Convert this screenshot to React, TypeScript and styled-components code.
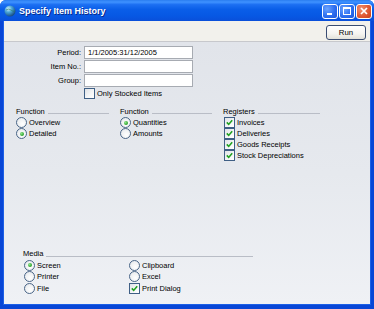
import React from "react";
import styled, { createGlobalStyle } from "styled-components";

const Global = createGlobalStyle`
  html, body { margin: 0; padding: 0; background: #fff; }
  body { font-family: "Liberation Sans", Arial, sans-serif; font-size: 7.5px; color: #000; }
  * { box-sizing: border-box; }
`;

const Window = styled.div`
  width: 374px;
  height: 309px;
  display: flex;
  flex-direction: column;
  background: #0a4ad9;
  border-radius: 6px 6px 0 0;
  overflow: hidden;
`;

const TitleBar = styled.div`
  height: 21px;
  flex: none;
  display: flex;
  align-items: center;
  padding: 0 2px 0 4px;
  background: linear-gradient(
    to bottom,
    #2a7df0 0%,
    #3f92ff 10%,
    #1c6ff2 22%,
    #0a5ee8 45%,
    #0758e4 75%,
    #0a50da 100%
  );
`;

const TitleText = styled.span`
  margin-left: 3px;
  font-size: 9px;
  font-weight: bold;
  color: #fff;
  text-shadow: 1px 1px 0 #0b2a8a;
  flex: 1;
`;

const Controls = styled.div`
  display: flex;
  gap: 1px;
  margin-top: 1px;
`;

const CtlButton = styled.div<{ $close?: boolean }>`
  width: 16px;
  height: 15px;
  border: 1px solid #fff;
  border-radius: 3px;
  display: flex;
  align-items: center;
  justify-content: center;
  background: ${(p) =>
    p.$close
      ? "radial-gradient(circle at 30% 30%, #f0906f 0%, #e05a34 55%, #c8401c 100%)"
      : "radial-gradient(circle at 30% 30%, #6ba4ff 0%, #2d6ff0 55%, #1d56d8 100%)"};
`;

const Frame = styled.div`
  flex: 1;
  display: flex;
  flex-direction: column;
  border-left: 3px solid #0846d6;
  border-right: 3px solid #0846d6;
  border-bottom: 4px solid #0846d6;
  padding: 0 1px 1px 1px;
  background: #1c5fe6;
`;

const Toolbar = styled.div`
  height: 21px;
  flex: none;
  display: flex;
  align-items: center;
  justify-content: flex-end;
  padding-right: 4px;
  background: #f2f1ec;
  border-bottom: 1px solid #c7c8cc;
  box-shadow: 0 1px 0 #fafafa;
`;

const RunButton = styled.div`
  width: 40px;
  height: 15px;
  margin-top: 2px;
  border: 1px solid #3a4d72;
  border-radius: 3px;
  background: linear-gradient(to bottom, #ffffff 0%, #f5f4f0 60%, #e3e2da 100%);
  display: flex;
  align-items: center;
  justify-content: center;
  font-size: 7.8px;
`;

const Body = styled.div`
  flex: 1;
  display: flex;
  flex-direction: column;
  padding: 4px 0 10px 0;
  background: linear-gradient(to bottom, #e1e4ea 0%, #e6e9ee 50%, #eff1f5 100%);
`;

const FieldGrid = styled.div`
  display: grid;
  grid-template-columns: 77px 109px;
  column-gap: 3px;
  row-gap: 1px;
  align-items: center;
`;

const Label = styled.span`
  text-align: right;
`;

const Input = styled.div`
  height: 13px;
  border: 1px solid #a7abb2;
  background: #fff;
  padding-left: 3px;
  display: flex;
  align-items: center;
`;

const CheckRow = styled.div<{ $indent?: number }>`
  display: flex;
  align-items: center;
  height: 11px;
  margin-left: ${(p) => p.$indent ?? 0}px;
`;

const Sections = styled.div`
  display: grid;
  grid-template-columns: 93px 92px 97px;
  column-gap: 11px;
  margin: 6px 0 0 12px;
`;

const Section = styled.div`
  display: flex;
  flex-direction: column;
`;

const Header = styled.div`
  display: flex;
  align-items: center;
  height: 12px;
`;

const HeaderText = styled.span`
  white-space: nowrap;
`;

const HeaderLine = styled.div`
  flex: 1;
  height: 1px;
  background: #b9bdc6;
  margin: 5px 0 0 3px;
`;

const Radio = styled.span<{ $on?: boolean }>`
  width: 11px;
  height: 11px;
  flex: none;
  border-radius: 50%;
  border: 1px solid #4a6688;
  background: radial-gradient(circle at 60% 65%, #ffffff 0%, #eef0f2 60%, #d8dce2 100%);
  display: flex;
  align-items: center;
  justify-content: center;
  margin-right: 2px;
  &::after {
    content: "";
    display: ${(p) => (p.$on ? "block" : "none")};
    width: 4px;
    height: 4px;
    border-radius: 50%;
    background: radial-gradient(circle at 35% 35%, #8de58b 0%, #2aa12a 70%, #1d8a1d 100%);
  }
`;

const Box = styled.span`
  width: 11px;
  height: 11px;
  flex: none;
  border: 1px solid #3f5f85;
  background: linear-gradient(135deg, #dfe2e6 0%, #f6f7f8 60%, #ffffff 100%);
  display: flex;
  align-items: center;
  justify-content: center;
  margin-right: 2px;
`;

const Media = styled.div`
  margin: auto 0 0 19px;
  width: 230px;
  display: flex;
  flex-direction: column;
`;

const MediaGrid = styled.div`
  display: grid;
  grid-template-columns: 105px 1fr;
  grid-auto-rows: 11.5px;
  align-items: center;
  margin-left: 1px;
`;

const Check = () => (
  <svg width="7" height="7" viewBox="0 0 7 7">
    <path d="M0.8 3.4 L2.7 5.4 L6.2 1.2" fill="none" stroke="#21a121" strokeWidth="1.6" />
  </svg>
);

const RadioItem = ({ label, on }: { label: string; on?: boolean }) => (
  <CheckRow>
    <Radio $on={on} />
    <span>{label}</span>
  </CheckRow>
);

const CheckItem = ({ label, on = true, indent }: { label: string; on?: boolean; indent?: number }) => (
  <CheckRow $indent={indent}>
    <Box>{on && <Check />}</Box>
    <span>{label}</span>
  </CheckRow>
);

const SectionHeader = ({ title }: { title: string }) => (
  <Header>
    <HeaderText>{title}</HeaderText>
    <HeaderLine />
  </Header>
);

export default function App() {
  return (
    <>
      <Global />
      <Window>
        <TitleBar>
          <svg width="12" height="12" viewBox="0 0 12 12">
            <defs>
              <radialGradient id="g" cx="35%" cy="30%" r="70%">
                <stop offset="0%" stopColor="#d6f2ff" />
                <stop offset="45%" stopColor="#4aa7d8" />
                <stop offset="100%" stopColor="#1a4f86" />
              </radialGradient>
            </defs>
            <circle cx="6" cy="6" r="5.5" fill="url(#g)" />
            <path d="M2 5 Q5 3 7 5 T11 6" fill="none" stroke="#2d7a5a" strokeWidth="1" opacity="0.6" />
          </svg>
          <TitleText>Specify Item History</TitleText>
          <Controls>
            <CtlButton>
              <svg width="10" height="10" viewBox="0 0 10 10">
                <rect x="2" y="7" width="5" height="2" fill="#fff" />
              </svg>
            </CtlButton>
            <CtlButton>
              <svg width="10" height="10" viewBox="0 0 10 10">
                <rect x="1.5" y="1.5" width="7" height="7" fill="none" stroke="#fff" strokeWidth="1" />
                <rect x="1.5" y="1.2" width="7" height="1.8" fill="#fff" />
              </svg>
            </CtlButton>
            <CtlButton $close>
              <svg width="10" height="10" viewBox="0 0 10 10">
                <path d="M2 2 L8 8 M8 2 L2 8" stroke="#fff" strokeWidth="1.7" />
              </svg>
            </CtlButton>
          </Controls>
        </TitleBar>
        <Frame>
          <Toolbar>
            <RunButton>Run</RunButton>
          </Toolbar>
          <Body>
            <FieldGrid>
              <Label>Period:</Label>
              <Input>1/1/2005:31/12/2005</Input>
              <Label>Item No.:</Label>
              <Input />
              <Label>Group:</Label>
              <Input />
              <span />
              <CheckItem label="Only Stocked Items" on={false} />
            </FieldGrid>
            <Sections>
              <Section>
                <SectionHeader title="Function" />
                <RadioItem label="Overview" />
                <RadioItem label="Detailed" on />
              </Section>
              <Section>
                <SectionHeader title="Function" />
                <RadioItem label="Quantities" on />
                <RadioItem label="Amounts" />
              </Section>
              <Section>
                <SectionHeader title="Registers" />
                <CheckItem label="Invoices" indent={1} />
                <CheckItem label="Deliveries" indent={1} />
                <CheckItem label="Goods Receipts" indent={1} />
                <CheckItem label="Stock Depreciations" indent={1} />
              </Section>
            </Sections>
            <Media>
              <SectionHeader title="Media" />
              <MediaGrid>
                <RadioItem label="Screen" on />
                <RadioItem label="Clipboard" />
                <RadioItem label="Printer" />
                <RadioItem label="Excel" />
                <RadioItem label="File" />
                <CheckItem label="Print Dialog" />
              </MediaGrid>
            </Media>
          </Body>
        </Frame>
      </Window>
    </>
  );
}
